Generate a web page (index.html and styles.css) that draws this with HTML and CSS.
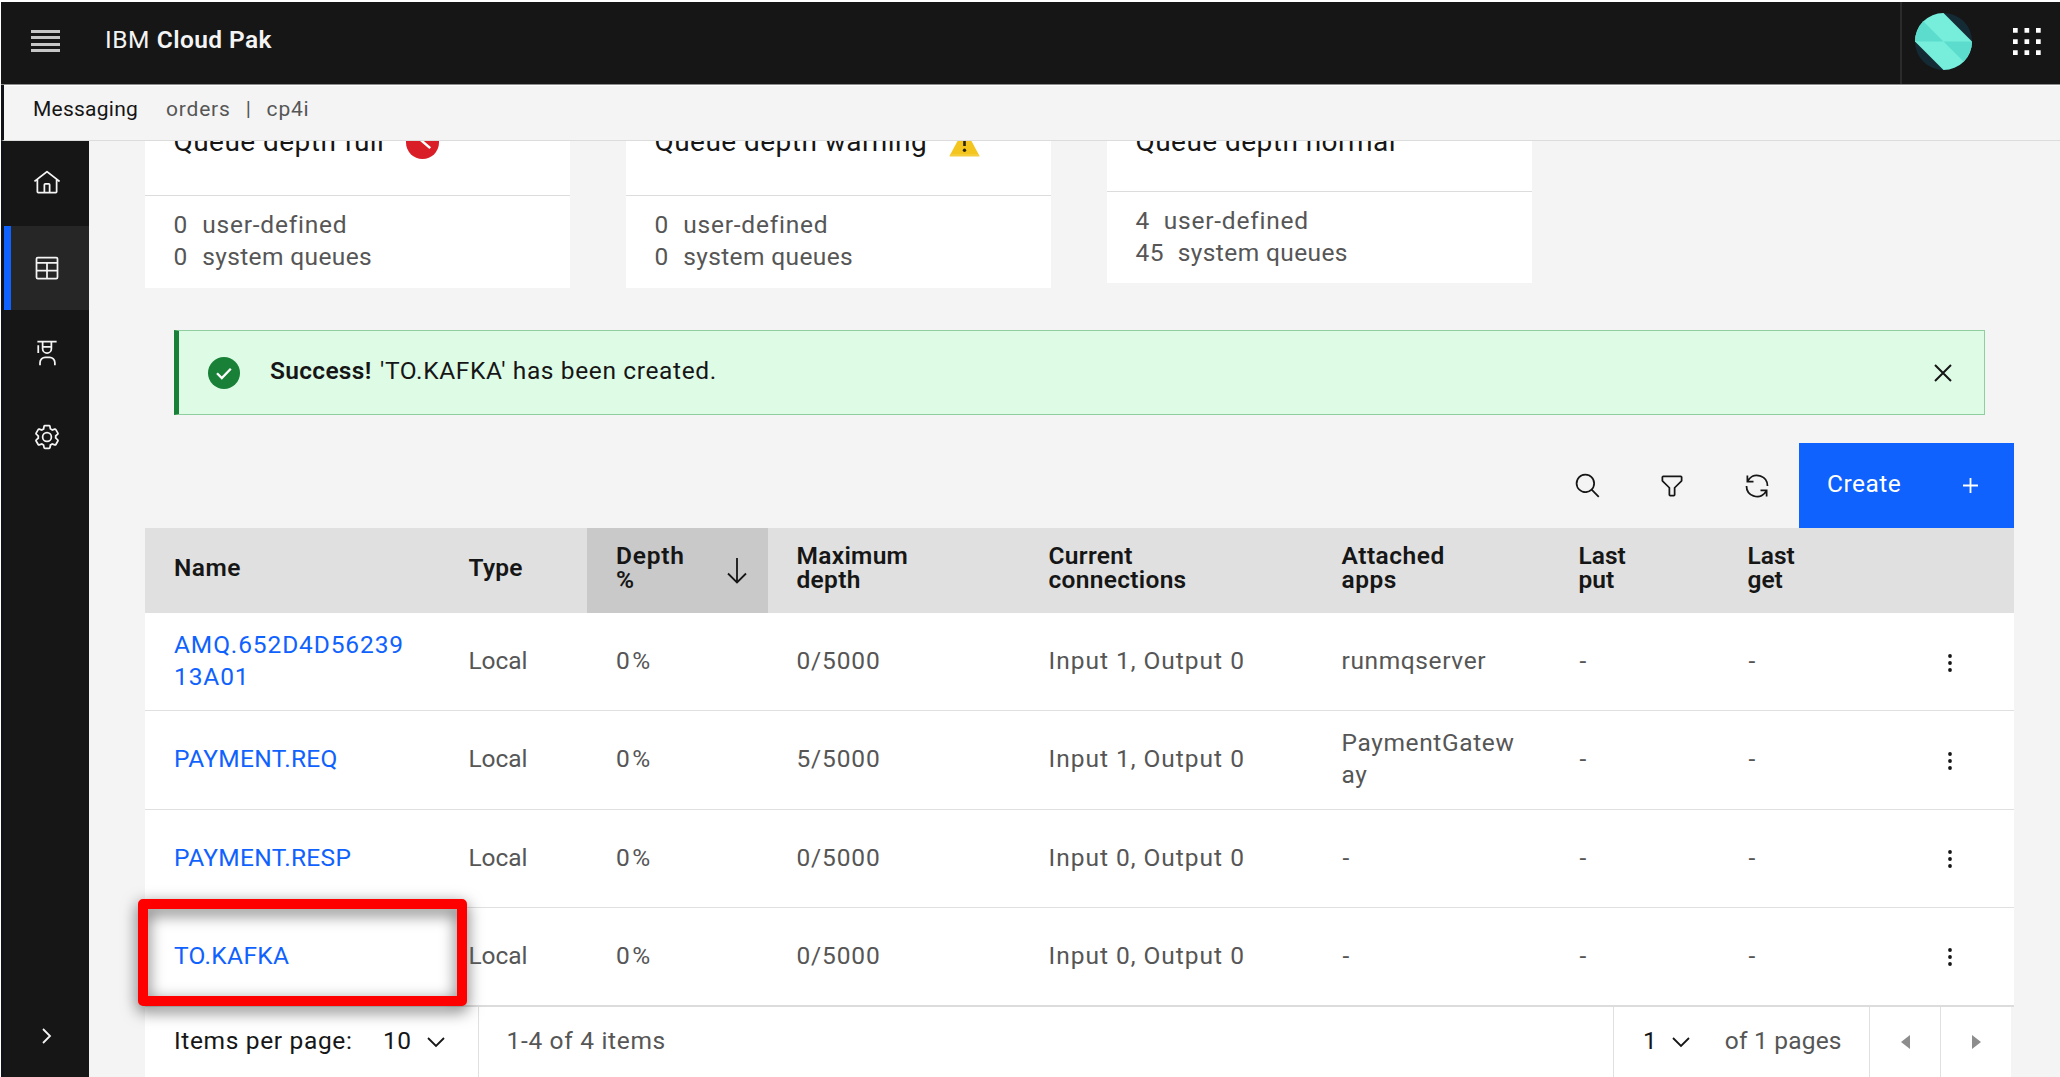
FILE: index.html
```html
<!DOCTYPE html>
<html lang="en">
<head>
<meta charset="utf-8">
<title>Messaging - orders</title>
<link rel="stylesheet" href="styles.css">
</head>
<body>
<div class="shell">
  <header class="header">
    <button class="menu-button" aria-label="Menu"><i></i><i></i><i></i><i></i></button>
    <div class="brand"><span class="brand-ibm">IBM</span><b class="brand-name">Cloud Pak</b></div>
    <div class="header-user">
      <svg class="avatar" viewBox="0 0 56 56">
        <defs><clipPath id="disc"><circle cx="28" cy="28" r="28"/></clipPath></defs>
        <g clip-path="url(#disc)">
          <rect width="56" height="56" fill="#142a35"/>
          <path d="M28 0 56 28V56H28L0 28V0Z" fill="#76eedb"/>
          <path d="M28 28H0V0ZM28 28H56V56Z" fill="#5cdccd"/>
        </g>
      </svg>
      <svg class="switcher" viewBox="0 0 28 28" fill="#fff">
        <path d="M0 0h4.7v4.7H0zM11.5 0h4.7v4.7h-4.7zM23 0h4.7v4.7H23zM0 11.2h4.7v4.7H0zM11.5 11.2h4.7v4.7h-4.7zM23 11.2h4.7v4.7H23zM0 22.3h4.7V27H0zM11.5 22.3h4.7V27h-4.7zM23 22.3h4.7V27H23z"/>
      </svg>
    </div>
  </header>

  <div class="subheader">
    <span class="sub-title">Messaging</span>
    <span class="sub-item sub-orders">orders</span>
    <span class="sub-item sub-bar">|</span>
    <span class="sub-item">cp4i</span>
  </div>

  <div class="body">
    <nav class="sidebar">
      <a class="nav-item"><svg class="icon" viewBox="0 0 32 32"><path d="M16.6123,2.2138a1.01,1.01,0,0,0-1.2427,0L1,13.4194l1.2427,1.5717L4,13.6210V26a2.0041,2.0041,0,0,0,2,2H26a2.0037,2.0037,0,0,0,2-2V13.63L29.7573,15,31,13.4282ZM18,26H14V18h4Zm2,0V18a2.0023,2.0023,0,0,0-2-2H14a2.002,2.002,0,0,0-2,2v8H6V12.0615l10-7.79,10,7.8005V26Z"/></svg></a>
      <a class="nav-item nav-active"><svg class="icon line" viewBox="0 0 32 32"><rect x="4" y="4" width="24" height="24" rx="1.5"/><path d="M4 10h24M4 19h24M16 10v18"/></svg></a>
      <a class="nav-item"><svg class="icon line" viewBox="0 0 32 32"><path d="M5 3h22M6 7v9M11 3v8a5 5 0 0 0 10 0V3M11 9h10M8 30v-3a6 6 0 0 1 6-6h5a6 6 0 0 1 6 6v3"/></svg></a>
      <a class="nav-item"><svg class="icon" viewBox="0 0 32 32"><path d="M27,16.76c0-.25,0-.5,0-.76s0-.51,0-.77l1.92-1.68A2,2,0,0,0,29.3,11L26.94,7a2,2,0,0,0-1.73-1,2,2,0,0,0-.64.1l-2.43.82a11.35,11.35,0,0,0-1.31-.75l-.51-2.52a2,2,0,0,0-2-1.61H13.64a2,2,0,0,0-2,1.61l-.51,2.52a11.48,11.48,0,0,0-1.32.75L7.43,6.06A2,2,0,0,0,6.79,6,2,2,0,0,0,5.06,7L2.7,11a2,2,0,0,0,.41,2.51L5,15.24c0,.25,0,.5,0,.76s0,.51,0,.77L3.11,18.45A2,2,0,0,0,2.7,21L5.06,25a2,2,0,0,0,1.73,1,2,2,0,0,0,.64-.1l2.43-.82a11.35,11.35,0,0,0,1.31.75l.51,2.52a2,2,0,0,0,2,1.61h4.72a2,2,0,0,0,2-1.61l.51-2.52a11.48,11.48,0,0,0,1.32-.75l2.42.82a2,2,0,0,0,.64.1,2,2,0,0,0,1.73-1L29.3,21a2,2,0,0,0-.41-2.51ZM25.21,24l-3.43-1.16a8.86,8.86,0,0,1-2.71,1.57L18.36,28H13.64l-.71-3.55a9.36,9.36,0,0,1-2.7-1.57L6.79,24,4.43,20l2.72-2.4a8.9,8.9,0,0,1,0-3.13L4.43,12,6.79,8l3.43,1.16a8.86,8.86,0,0,1,2.71-1.57L13.64,4h4.72l.71,3.55a9.36,9.36,0,0,1,2.7,1.57L25.21,8,27.57,12l-2.72,2.4a8.9,8.9,0,0,1,0,3.13L27.57,20ZM16,22a6,6,0,1,1,6-6A5.94,5.94,0,0,1,16,22Zm0-10a3.91,3.91,0,0,0-4,4,3.91,3.91,0,0,0,4,4,3.91,3.91,0,0,0,4-4A3.91,3.91,0,0,0,16,12Z"/></svg></a>
      <a class="nav-expand"><svg class="icon-expand" viewBox="0 0 10 16"><path d="M1 1l7 7-7 7"/></svg></a>
    </nav>

    <main class="main">
      <section class="cards">
        <article class="card">
          <h3 class="card-title"><span>Queue depth full</span>
            <svg class="status-full" viewBox="0 0 32 32"><circle cx="16" cy="16" r="16" fill="#da1e28"/><path d="M8.5 8.5l15 13" stroke="#fff" stroke-width="2.4"/></svg>
          </h3>
          <div class="card-body">
            <div class="count"><span>0</span><span class="user">user-defined</span></div>
            <div class="count"><span>0</span><span class="system">system queues</span></div>
          </div>
        </article>
        <article class="card">
          <h3 class="card-title"><span>Queue depth warning</span>
            <svg class="status-warn" viewBox="0 0 31 30"><path d="M15.5 1 30.5 29H.5Z" fill="#f4c51f"/><path d="M1.5 27.2h28l1 2.3H.5z" fill="#f5ce3e"/><path d="M15.5 9v10" stroke="#2b2410" stroke-width="2.6"/><circle cx="15.5" cy="23.2" r="1.7" fill="#2b2410"/></svg>
          </h3>
          <div class="card-body">
            <div class="count"><span>0</span><span class="user">user-defined</span></div>
            <div class="count"><span>0</span><span class="system">system queues</span></div>
          </div>
        </article>
        <article class="card card-normal">
          <h3 class="card-title"><span>Queue depth normal</span></h3>
          <div class="card-body">
            <div class="count"><span>4</span><span class="user">user-defined</span></div>
            <div class="count"><span>45</span><span class="system">system queues</span></div>
          </div>
        </article>
      </section>

      <section class="notice">
        <svg class="notice-icon" viewBox="0 0 32 32"><circle cx="16" cy="16" r="16" fill="#198038"/><path d="M9 16.3l4.8 4.8 9-9.4" fill="none" stroke="#fff" stroke-width="2.3"/></svg>
        <p class="notice-text"><b>Success!</b><span>'TO.KAFKA' has been created.</span></p>
        <svg class="notice-close" viewBox="0 0 18 18"><path d="M1 1l16 16M17 1L1 17"/></svg>
      </section>

      <section class="toolbar">
        <button class="tool"><svg viewBox="0 0 32 32"><path d="M29,27.5859l-7.5521-7.5521a11.0177,11.0177,0,1,0-1.4141,1.4141L27.5859,29ZM4,13a9,9,0,1,1,9,9A9.01,9.01,0,0,1,4,13Z"/></svg></button>
        <button class="tool"><svg viewBox="0 0 32 32"><path d="M18,28H14a2,2,0,0,1-2-2V18.41L4.59,11A2,2,0,0,1,4,9.59V6A2,2,0,0,1,6,4H26a2,2,0,0,1,2,2V9.59A2,2,0,0,1,27.41,11L20,18.41V26A2,2,0,0,1,18,28ZM6,6V9.59l8,8V26h4V17.59l8-8V6Z"/></svg></button>
        <button class="tool"><svg viewBox="0 0 32 32"><path d="M12,10H6.78A11,11,0,0,1,27,16h2A13,13,0,0,0,6,7.68V4H4v8h8Z"/><path d="M20,22h5.22A11,11,0,0,1,5,16H3a13,13,0,0,0,23,8.32V28h2V20H20Z"/></svg></button>
        <button class="create"><span>Create</span><svg viewBox="0 0 14 14"><path d="M7 0v14M0 7h14"/></svg></button>
      </section>

      <section class="table">
        <div class="row head">
          <div class="cell h-name">Name</div>
          <div class="cell h-type">Type</div>
          <div class="cell h-depth"><span>Depth<br>%</span><svg class="sort" viewBox="0 0 20 26"><path d="M10 0v24.5M1 15.5l9 9 9-9"/></svg></div>
          <div class="cell h-max">Maximum<br>depth</div>
          <div class="cell h-conn">Current<br>connections</div>
          <div class="cell h-apps">Attached<br>apps</div>
          <div class="cell h-last">Last<br>put</div>
          <div class="cell h-last">Last<br>get</div>
          <div class="cell"></div>
        </div>
        <div class="row">
          <div class="cell link t-amq">AMQ.652D4D56239<br>13A01</div>
          <div class="cell t-local">Local</div><div class="cell t-pct">0%</div><div class="cell t-num">0/5000</div>
          <div class="cell t-conn">Input 1, Output 0</div><div class="cell t-app">runmqserver</div>
          <div class="cell t-dash">-</div><div class="cell t-dash">-</div>
          <div class="cell more"><svg viewBox="0 0 4 18"><circle cx="2" cy="2" r="1.9"/><circle cx="2" cy="9" r="1.9"/><circle cx="2" cy="16" r="1.9"/></svg></div>
        </div>
        <div class="row">
          <div class="cell link t-name">PAYMENT.REQ</div>
          <div class="cell t-local">Local</div><div class="cell t-pct">0%</div><div class="cell t-num">5/5000</div>
          <div class="cell t-conn">Input 1, Output 0</div><div class="cell t-app">PaymentGatew<br>ay</div>
          <div class="cell t-dash">-</div><div class="cell t-dash">-</div>
          <div class="cell more"><svg viewBox="0 0 4 18"><circle cx="2" cy="2" r="1.9"/><circle cx="2" cy="9" r="1.9"/><circle cx="2" cy="16" r="1.9"/></svg></div>
        </div>
        <div class="row">
          <div class="cell link t-name">PAYMENT.RESP</div>
          <div class="cell t-local">Local</div><div class="cell t-pct">0%</div><div class="cell t-num">0/5000</div>
          <div class="cell t-conn">Input 0, Output 0</div><div class="cell t-dash">-</div>
          <div class="cell t-dash">-</div><div class="cell t-dash">-</div>
          <div class="cell more"><svg viewBox="0 0 4 18"><circle cx="2" cy="2" r="1.9"/><circle cx="2" cy="9" r="1.9"/><circle cx="2" cy="16" r="1.9"/></svg></div>
        </div>
        <div class="row row-last">
          <div class="cell link t-name">TO.KAFKA<span class="highlight"></span></div>
          <div class="cell t-local">Local</div><div class="cell t-pct">0%</div><div class="cell t-num">0/5000</div>
          <div class="cell t-conn">Input 0, Output 0</div><div class="cell t-dash">-</div>
          <div class="cell t-dash">-</div><div class="cell t-dash">-</div>
          <div class="cell more"><svg viewBox="0 0 4 18"><circle cx="2" cy="2" r="1.9"/><circle cx="2" cy="9" r="1.9"/><circle cx="2" cy="16" r="1.9"/></svg></div>
        </div>
      </section>

      <footer class="pagination">
        <div class="page-size"><span class="page-label">Items per page:</span><span class="page-ten">10</span><svg class="chevron" viewBox="0 0 18 11"><path d="M1 1l8 8 8-8"/></svg></div>
        <div class="page-range">1-4 of 4 items</div>
        <div class="page-select"><span>1</span><svg class="chevron" viewBox="0 0 18 11"><path d="M1 1l8 8 8-8"/></svg><span class="page-total">of 1 pages</span></div>
        <div class="page-step"><svg viewBox="0 0 9 14"><path d="M9 0v14L0 7z"/></svg></div>
        <div class="page-step page-next"><svg viewBox="0 0 9 14"><path d="M0 0v14l9-7z"/></svg></div>
      </footer>
    </main>
  </div>
</div>
</body>
</html>
```
FILE: styles.css
```css
* { box-sizing: border-box; }
html, body { height: 100%; overflow: hidden; }
body {
  margin: 0;
  background: #fff;
  color: #565656;
  font: 24.5px/32px Roboto, "Noto Sans", sans-serif;
}
button { border: 0; padding: 0; background: none; font: inherit; }
h3, p { margin: 0; font-weight: 400; }
svg { display: block; flex: none; }

.shell {
  display: flex;
  flex-direction: column;
  height: 1077px;
  padding: 2px 0 0 1px;
  overflow: hidden;
}

/* top bar */
.header {
  flex: none;
  display: flex;
  align-items: center;
  height: 83px;
  padding-left: 30px;
  background: #161616;
  border-bottom: 1px solid #8d8d8d;
}
.menu-button { display: flex; flex-direction: column; gap: 3.3px; width: 29px; margin-top: -4px; }
.menu-button i { height: 3px; background: #c6c6c6; }
.brand { display: flex; gap: 7px; margin-left: 45px; padding-bottom: 7px; color: #f4f4f4; }
.brand-ibm { letter-spacing: .5px; }
.brand-name { font-weight: 600; letter-spacing: .38px; }
.header-user {
  display: flex;
  align-items: center;
  align-self: stretch;
  width: 160px;
  margin-left: auto;
  padding-left: 13px;
  border-left: 2px solid #2b2b2b;
}
.avatar { width: 57px; height: 57px; margin-top: -4px; }
.switcher { width: 28px; height: 28px; margin: -3px 0 0 41px; }

.subheader {
  flex: none;
  display: flex;
  align-items: center;
  height: 56px;
  padding: 0 0 7px 29px;
  background: #f4f4f4;
  border-left: 3px solid #10131a;
  border-bottom: 1px solid #dcdcdc;
  font-size: 21px;
  box-shadow: inset 0 1px #fff;
}
.sub-title { color: #161616; letter-spacing: .24px; margin-right: 28px; }
.sub-item { letter-spacing: .8px; }
.sub-orders { margin-right: 15px; }
.sub-bar { margin-right: 15px; }

.body { flex: 1; display: flex; min-height: 0; }

/* navigation rail */
.sidebar {
  flex: none;
  display: flex;
  flex-direction: column;
  width: 88px;
  background: #161616;
  border-left: 3px solid #10131a;
}
.nav-item { display: flex; align-items: center; justify-content: center; height: 84.7px; }
.nav-active { background: #262626; box-shadow: inset 7px 0 #0f62fe; }
.icon { width: 28px; height: 28px; fill: #f4f4f4; }
.icon.line { fill: none; stroke: #f4f4f4; stroke-width: 2; }
.nav-expand { display: flex; justify-content: center; margin-top: auto; padding-bottom: 33px; }
.icon-expand { width: 10px; height: 16px; fill: none; stroke: #f4f4f4; stroke-width: 1.8; }

.main { flex: 1; min-width: 0; background: #f4f4f4; padding: 0 46px 0 56px; }

/* summary cards */
.cards { display: flex; align-items: flex-start; gap: 56px; height: 189px; }
.card { width: 425px; height: 147px; background: #fff; overflow: hidden; }
.card-title {
  display: flex;
  align-items: center;
  height: 36px;
  margin: -17px 0 35px;
  padding-left: 28.5px;
  color: #161616;
  font-size: 28px;
  line-height: 36px;
  letter-spacing: .46px;
}
.status-full { width: 33px; height: 33px; margin-left: 22px; }
.status-warn { width: 31px; height: 30px; margin-left: 22px; }
.card-body { border-top: 1px solid #dcdcdc; padding: 13px 0 0 28.5px; }
.count { display: flex; gap: 14.5px; letter-spacing: .4px; }
.count .user { letter-spacing: .78px; }
.count .system { letter-spacing: .38px; }
.card-normal { height: 142px; }
.card-normal .card-title { margin-bottom: 31px; }
.card-normal .count { gap: 14px; }

/* notification */
.notice {
  display: flex;
  align-items: center;
  height: 85px;
  width: 1811px;
  margin-left: 29px;
  padding: 0 32px 0 29px;
  background: #defbe6;
  border: 1px solid #8fcf9f;
  border-left: 5px solid #198038;
  color: #161616;
}
.notice-icon { width: 32px; height: 32px; }
.notice-text { display: flex; gap: 8.5px; margin-left: 30px; padding-bottom: 4px; letter-spacing: .63px; }
.notice-text b { font-weight: 600; letter-spacing: .3px; }
.notice-close { width: 18px; height: 18px; margin-left: auto; fill: none; stroke: #161616; stroke-width: 2; }

/* table toolbar */
.toolbar { display: flex; justify-content: flex-end; height: 85px; margin-top: 28px; }
.tool { display: flex; align-items: center; justify-content: center; width: 84.5px; }
.tool svg { width: 28px; height: 28px; fill: #161616; }
.create {
  display: flex;
  align-items: center;
  justify-content: space-between;
  width: 215px;
  padding: 0 36px 0 28px;
  background: #0f62fe;
  color: #fff;
}
.create span { padding-bottom: 4px; letter-spacing: .5px; }
.create svg { width: 15px; height: 15px; fill: none; stroke: #fff; stroke-width: 1.7; }

/* queue table */
.row {
  display: grid;
  grid-template-columns: 294.5px 147.5px 180.5px 252px 293px 237px 169px 169px 1fr;
  height: 98.3px;
  background: #fff;
  border-bottom: 1.5px solid #e0e0e0;
}
.row-last { border-bottom: 2px solid #dcdcdc; height: 99px; }
.cell { position: relative; display: flex; align-items: center; padding: 0 0 1px 29px; }
.head { height: 85px; background: #e0e0e0; border: 0; color: #161616; font-weight: 600; line-height: 24px; }
.head .cell { padding-bottom: 6px; }
.h-name { letter-spacing: .5px; }
.h-type { letter-spacing: .25px; }
.head .h-depth { justify-content: space-between; padding-right: 21px; background: #c9c9c9; letter-spacing: .8px; }
.h-max { letter-spacing: .3px; }
.h-conn { letter-spacing: .3px; }
.h-apps { letter-spacing: .5px; }
.sort { width: 20px; height: 26px; margin-top: 6px; fill: none; stroke: #161616; stroke-width: 1.8; }
.link { color: #0f62fe; }
.t-amq { letter-spacing: .88px; }
.t-name { letter-spacing: .33px; }
.t-local { letter-spacing: -.1px; }
.t-pct { letter-spacing: 2.4px; }
.t-num { letter-spacing: .85px; }
.t-conn { letter-spacing: .98px; }
.t-app { letter-spacing: .62px; }
.t-dash { padding-left: 30px; }
.more { justify-content: flex-end; padding: 2px 62px 0 0; }
.more svg { width: 4px; height: 18px; fill: #161616; }

/* callout frame drawn over the queue name */
.highlight {
  position: absolute;
  left: -7px;
  top: -9px;
  width: 329px;
  height: 107px;
  border: 10px solid #f00;
  border-radius: 5px;
  filter: drop-shadow(0 5px 8px rgba(0, 0, 0, .6));
}

/* pagination */
.pagination { display: flex; width: 1866px; height: 70px; background: #fff; }
.page-size, .page-range, .page-select, .page-step { display: flex; align-items: center; padding-bottom: 1px; }
.page-size { width: 333.5px; padding-left: 29px; border-right: 1.5px solid #e0e0e0; color: #161616; }
.page-label { width: 209px; letter-spacing: .65px; }
.page-ten { width: 43.5px; letter-spacing: .6px; }
.chevron { width: 18px; height: 11px; margin-top: 3px; fill: none; stroke: #161616; stroke-width: 1.8; }
.page-range { padding-left: 28px; letter-spacing: .68px; }
.page-select { width: 256px; margin-left: auto; padding-left: 29px; border-left: 1.5px solid #e0e0e0; color: #161616; }
.page-select .chevron { margin-left: 15px; }
.page-total { margin-left: 35px; color: #565656; letter-spacing: .2px; }
.page-step { width: 71px; justify-content: center; border-left: 1.5px solid #e0e0e0; padding-bottom: 0; }
.page-step svg { width: 9px; height: 14px; fill: #8d8d8d; }
```
